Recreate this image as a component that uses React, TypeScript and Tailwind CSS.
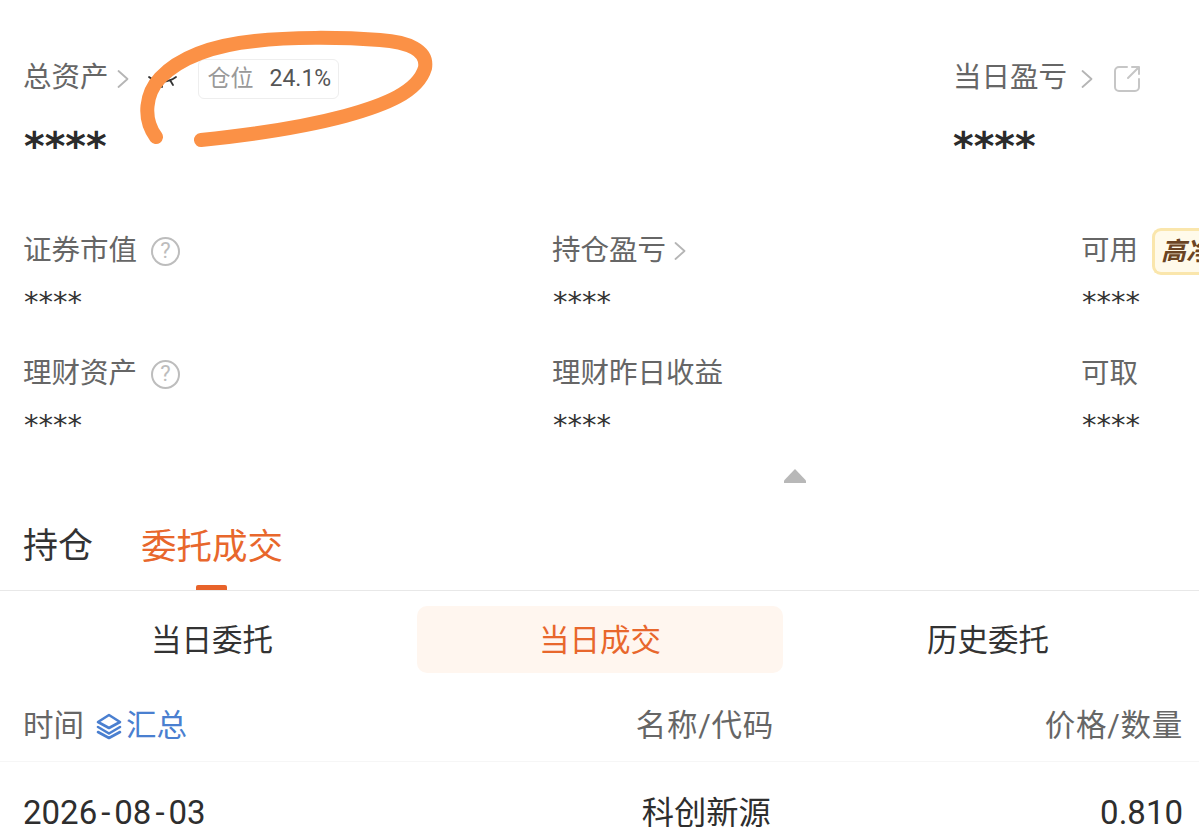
const cjk = "font-['Roboto','Noto_Sans_CJK_SC',sans-serif]"

function Chevron({ className }: { className: string }) {
  return (
    <svg className={className} viewBox="0 0 12 20" fill="none" stroke="#b5b5b5" strokeWidth="1.8" strokeLinecap="round" strokeLinejoin="round">
      <path d="M1.5 2l9 8-9 8" />
    </svg>
  )
}

function Help() {
  return (
    <span className="ml-[14px] flex h-[29px] w-[29px] items-center justify-center rounded-full border-2 border-[#bdbdbd] text-[22px] leading-none text-[#bdbdbd]">
      ?
    </span>
  )
}

function Stars({ big }: { big?: boolean }) {
  if (big) {
    return <div className="h-[40px] text-[39.500px] font-bold leading-[46px] text-[#2b2b2b] font-['DejaVu_Sans',sans-serif]">****</div>
  }
  return <div className="h-[28px] pl-[1px] pt-[1px] text-[29px] leading-[34px] text-[#333333] font-['DejaVu_Sans',sans-serif]">****</div>
}

function Cell({ label, children }: { label: string; children?: React.ReactNode }) {
  return (
    <div className="flex h-[123px] flex-col">
      <div className="flex h-[36px] items-center whitespace-nowrap pt-[4px] text-[28.500px] leading-none text-[#666666]">
        {label}
        {children}
      </div>
      <div className="mt-[17px]">
        <Stars />
      </div>
    </div>
  )
}

export default function App() {
  return (
    <div className={`relative h-[838px] w-[1199px] overflow-hidden bg-white ${cjk}`}>
      {/* 资产概览 */}
      <div className="flex justify-between pl-[23px] pr-[58px] pt-[60px]">
        <div>
          <div className="flex h-[37px] items-center text-[28.500px] leading-none text-[#666666]">
            总资产
            <Chevron className="ml-[8px] h-[20px] w-[12px]" />
            <svg className="ml-[17px] h-[20px] w-[32px]" viewBox="0 0 32 20" fill="none" stroke="#333333" strokeWidth="1.8" strokeLinecap="round">
              <path d="M3 8C10 14 22 14 30 8M16 13v5M24 11l3 5M8 11l-3 5" />
            </svg>
            <div className="ml-[20px] flex h-[40px] w-[141px] items-center rounded-[6px] border border-[#eeeeee] pl-[9px] text-[23px]">
              <span className="text-[#999999]">仓位</span>
              <span className="ml-[16px] text-[#555555]">24.1%</span>
            </div>
          </div>
          <div className="mt-[26px] pl-[1px]">
            <Stars big />
          </div>
        </div>
        <div>
          <div className="flex h-[37px] items-center text-[28.500px] leading-none text-[#666666]">
            当日盈亏
            <Chevron className="ml-[14px] h-[20px] w-[12px]" />
            <svg className="ml-[21px] h-[27px] w-[27px]" viewBox="0 0 27 27" fill="none" stroke="#c6c6c6" strokeWidth="2" strokeLinecap="round" strokeLinejoin="round">
              <path d="M13 2H5a4 4 0 0 0-4 4v16a4 4 0 0 0 4 4h16a4 4 0 0 0 4-4v-8M14 13L25 2M18 2h7v7" />
            </svg>
          </div>
          <div className="mt-[26px]">
            <Stars big />
          </div>
        </div>
      </div>

      {/* 明细 */}
      <div className="mt-[68px] grid grid-cols-[529px_529px_141px] pl-[23px]">
        <Cell label="证券市值"><Help /></Cell>
        <Cell label="持仓盈亏"><Chevron className="ml-[8px] h-[20px] w-[12px]" /></Cell>
        <Cell label="可用">
          <span className="ml-[14px] flex h-[47px] w-[80px] shrink-0 items-center rounded-l-[9px] border-[3px] border-r-0 border-[#fae6ac] bg-[#fffaea] pl-[6px] text-[25px] font-bold italic text-[#6b4423]">
            高净值
          </span>
        </Cell>
        <Cell label="理财资产"><Help /></Cell>
        <Cell label="理财昨日收益" />
        <Cell label="可取" />
      </div>

      <div className="-mt-[9px] flex justify-center pl-[390px]">
        <svg className="h-[15px] w-[24px]" viewBox="0 0 24 15" fill="#b8b8b8">
          <path d="M12 1L1 12.5V15h22v-2.500z" />
        </svg>
      </div>

      {/* 持仓 / 委托成交 */}
      <div className="mt-[36px] flex h-[72px] border-b border-[#e8e8e8] pl-[23px]">
        <div className="text-[35px] leading-[56px] text-[#333333]">持仓</div>
        <div className="relative ml-[48px] text-[35.500px] leading-[56px] text-[#e8672c]">
          委托成交
          <div className="absolute bottom-0 left-[55px] h-[5px] w-[31px] rounded-t-[2px] bg-[#e8632a]" />
        </div>
      </div>

      <div className="mt-[15px] grid h-[67px] grid-cols-[366px_366px_366px] gap-x-[22px] pl-[29px] text-[30.500px] leading-none">
        <div className="flex items-center justify-center pt-[3px] text-[#333333]">当日委托</div>
        <div className="flex items-center justify-center rounded-[10px] bg-[#fff6ef] pt-[3px] text-[#e8672c]">当日成交</div>
        <div className="flex items-center justify-center pt-[3px] text-[#333333]">历史委托</div>
      </div>

      {/* 表头 */}
      <div className="mt-[15px] grid h-[74px] grid-cols-3 items-center border-b border-[#f6f6f6] pl-[23px] pr-[16px] pt-[3px] text-[30.500px] leading-none text-[#666666]">
        <div className="flex items-center">
          时间
          <svg className="ml-[11px] h-[28px] w-[28px]" viewBox="0 0 28 28" fill="none" stroke="#4a7fd0" strokeWidth="2.600" strokeLinejoin="round" strokeLinecap="round">
            <path d="M14 3L25 10 14 16 3 10zM3 15l11 6.500L25 15M3 20l11 6 11-6" />
          </svg>
          <span className="ml-[3px] text-[#4a7fd0]">汇总</span>
        </div>
        <div className="pl-[226px] whitespace-nowrap tracking-[0.750px]">名称/代码</div>
        <div className="text-right whitespace-nowrap tracking-[0.750px]">价格/数量</div>
      </div>

      <div className="grid grid-cols-3 items-center pl-[23px] pr-[16px] pt-[31px] text-[33px] leading-[40px] text-[#2e2e2e]">
        <div>
          2026<span className="mx-[4px]">-</span>08<span className="mx-[4px]">-</span>03
        </div>
        <div className="pl-[232px] text-[32.250px] whitespace-nowrap">科创新源</div>
        <div className="text-right">0.810</div>
      </div>

      {/* 手绘涂抹 */}
      <svg className="pointer-events-none absolute left-0 top-0 h-[170px] w-[450px]" viewBox="0 0 450 170" fill="none" stroke="#fb9146" strokeWidth="14" strokeLinecap="round" strokeLinejoin="round">
        <path d="M201 140C250 135 300 128 345 116C385 105 418 92 425 68C428 50 408 42 380 40C340 37 290 37 255 41C215 45 180 57 160 78C146 93 142 118 156 137" />
      </svg>
    </div>
  )
}
